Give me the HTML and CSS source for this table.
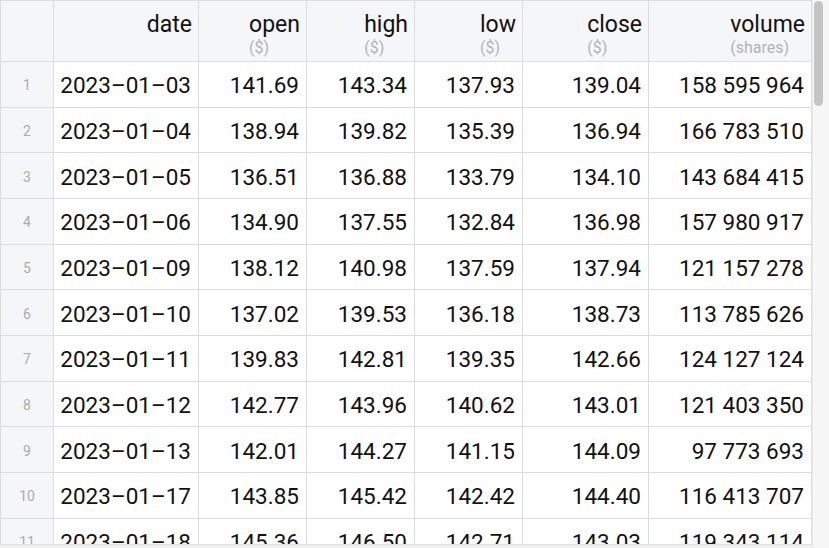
FILE: index.html
```html
<!DOCTYPE html>
<html>
<head>
<meta charset="utf-8">
<link rel="stylesheet" href="styles.css">
</head>
<body>
<div class="frame">
  <div class="main">
    <div class="grid">
      <div class="hcell idx"></div>
      <div class="hcell"><div class="head"><span class="label">date</span></div></div>
      <div class="hcell"><div class="head"><span class="label">open</span><span class="unit">($)</span></div></div>
      <div class="hcell"><div class="head"><span class="label">high</span><span class="unit">($)</span></div></div>
      <div class="hcell"><div class="head"><span class="label">low</span><span class="unit">($)</span></div></div>
      <div class="hcell"><div class="head"><span class="label">close</span><span class="unit">($)</span></div></div>
      <div class="hcell"><div class="head"><span class="label">volume</span><span class="unit">(shares)</span></div></div>

      <div class="cell idx">1</div><div class="cell">2023–01–03</div><div class="cell">141.69</div><div class="cell">143.34</div><div class="cell">137.93</div><div class="cell">139.04</div><div class="cell">158 595 964</div>
      <div class="cell idx">2</div><div class="cell">2023–01–04</div><div class="cell">138.94</div><div class="cell">139.82</div><div class="cell">135.39</div><div class="cell">136.94</div><div class="cell">166 783 510</div>
      <div class="cell idx">3</div><div class="cell">2023–01–05</div><div class="cell">136.51</div><div class="cell">136.88</div><div class="cell">133.79</div><div class="cell">134.10</div><div class="cell">143 684 415</div>
      <div class="cell idx">4</div><div class="cell">2023–01–06</div><div class="cell">134.90</div><div class="cell">137.55</div><div class="cell">132.84</div><div class="cell">136.98</div><div class="cell">157 980 917</div>
      <div class="cell idx">5</div><div class="cell">2023–01–09</div><div class="cell">138.12</div><div class="cell">140.98</div><div class="cell">137.59</div><div class="cell">137.94</div><div class="cell">121 157 278</div>
      <div class="cell idx">6</div><div class="cell">2023–01–10</div><div class="cell">137.02</div><div class="cell">139.53</div><div class="cell">136.18</div><div class="cell">138.73</div><div class="cell">113 785 626</div>
      <div class="cell idx">7</div><div class="cell">2023–01–11</div><div class="cell">139.83</div><div class="cell">142.81</div><div class="cell">139.35</div><div class="cell">142.66</div><div class="cell">124 127 124</div>
      <div class="cell idx">8</div><div class="cell">2023–01–12</div><div class="cell">142.77</div><div class="cell">143.96</div><div class="cell">140.62</div><div class="cell">143.01</div><div class="cell">121 403 350</div>
      <div class="cell idx">9</div><div class="cell">2023–01–13</div><div class="cell">142.01</div><div class="cell">144.27</div><div class="cell">141.15</div><div class="cell">144.09</div><div class="cell">97 773 693</div>
      <div class="cell idx">10</div><div class="cell">2023–01–17</div><div class="cell">143.85</div><div class="cell">145.42</div><div class="cell">142.42</div><div class="cell">144.40</div><div class="cell">116 413 707</div>
      <div class="cell idx">11</div><div class="cell">2023–01–18</div><div class="cell">145.36</div><div class="cell">146.50</div><div class="cell">142.71</div><div class="cell">143.03</div><div class="cell">119 343 114</div>
    </div>
    <div class="hbar"></div>
  </div>
  <div class="vbar"><div class="thumb"></div></div>
</div>
</body>
</html>
```

FILE: styles.css
```css
* { box-sizing: border-box; }
html, body {
  margin: 0;
  padding: 0;
  background: #ffffff;
  overflow: hidden;
}
body {
  font-family: "Source Sans Pro", Roboto, "Liberation Sans", sans-serif;
  color: #111;
}
.frame {
  display: flex;
  width: 829px;
  height: 548px;
}
.main {
  display: flex;
  flex-direction: column;
  width: 812px;
  height: 548px;
}
.grid {
  flex: 1;
  overflow: hidden;
  display: grid;
  grid-template-columns: 52px 144px 107px 107px 107px 125px 162px;
  grid-template-rows: 60px;
  grid-auto-rows: 44.667px;
  gap: 1px;
  padding: 1px 1px 0 1px;
  background: #dcdcdf;
  align-content: start;
}
.hcell {
  background: #f5f6f8;
  display: flex;
  justify-content: flex-end;
  align-items: flex-start;
  padding: 11px 6px 0 0;
}
.head {
  display: flex;
  flex-direction: column;
  align-items: flex-start;
}
.label {
  font-size: 23px;
  line-height: 25px;
  color: #111;
}
.unit {
  font-size: 16px;
  line-height: 17px;
  margin-top: 2px;
  color: #b3b3b3;
}
.cell {
  background: #ffffff;
  display: flex;
  align-items: center;
  justify-content: flex-end;
  padding: 2px 7px 0 0;
  font-size: 22.5px;
  white-space: nowrap;
  color: #111;
}
.cell.idx {
  background: #f5f6f8;
  justify-content: center;
  padding: 2px 0 0 0;
  font-size: 14px;
  color: #ababab;
}
.hbar {
  height: 4px;
  background: #f0f0f0;
  border-top: 1px solid #e2e2e2;
}
.vbar {
  width: 17px;
  height: 548px;
  background: #f7f7f7;
  border-left: 1px solid #ececec;
  padding: 1px 0 0 1px;
}
.thumb {
  width: 9px;
  height: 105px;
  border-radius: 5px;
  background: #c4c4c4;
}
```
